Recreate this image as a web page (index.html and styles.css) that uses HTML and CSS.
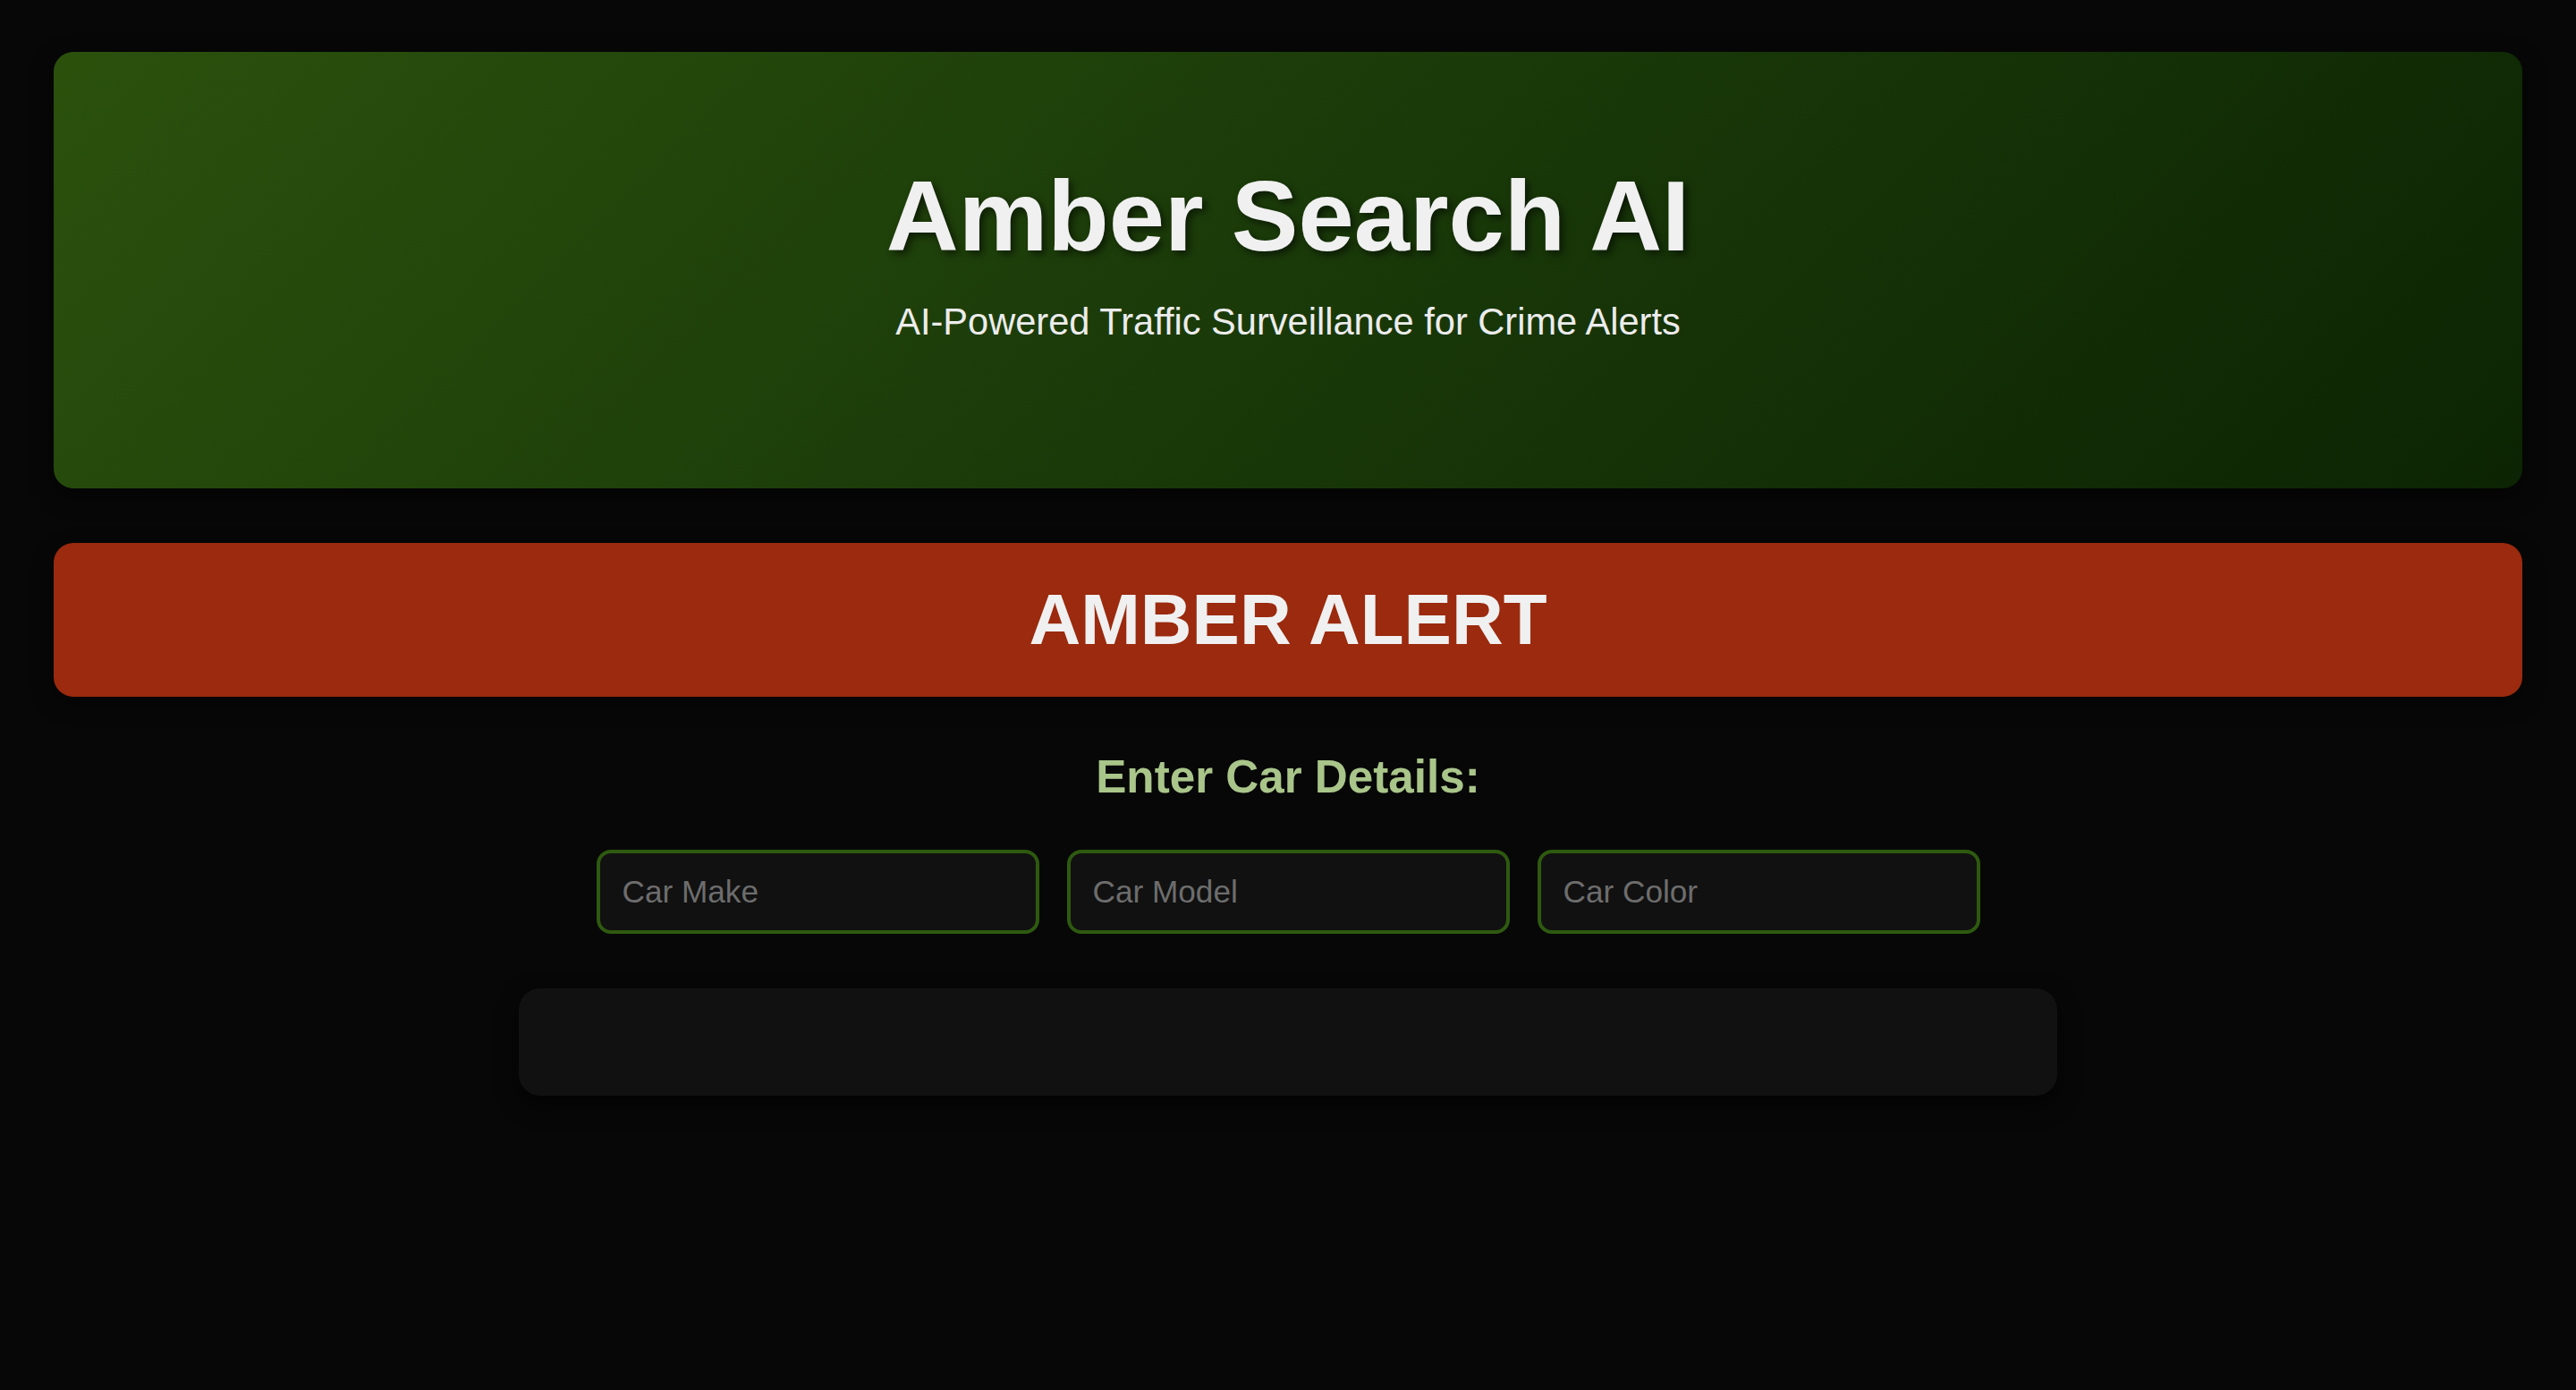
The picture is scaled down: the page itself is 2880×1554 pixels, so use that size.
FILE: index.html
```html
<!DOCTYPE html>
<html lang="en">
<head>
<meta charset="utf-8">
<title>Amber Search AI</title>
<link rel="stylesheet" href="styles.css">
</head>
<body>
  <div class="page">
    <header class="hero">
      <h1 class="hero-title">Amber Search AI</h1>
      <p class="hero-sub">AI-Powered Traffic Surveillance for Crime Alerts</p>
    </header>

    <section class="alert">
      <h2 class="alert-title">AMBER ALERT</h2>
    </section>

    <section class="details">
      <h3 class="details-title">Enter Car Details:</h3>
      <div class="inputs">
        <input class="field" type="text" placeholder="Car Make">
        <input class="field" type="text" placeholder="Car Model">
        <input class="field" type="text" placeholder="Car Color">
      </div>
      <div class="results"></div>
    </section>
  </div>
</body>
</html>
```

FILE: styles.css
```css
html, body {
  margin: 0;
  padding: 0;
  background: #070707;
  min-height: 100%;
}

body {
  font-family: "Liberation Sans", Arial, sans-serif;
  color: #f0f0f0;
}

.page {
  padding: 58px 60px 60px;
  display: flex;
  flex-direction: column;
  align-items: stretch;
}

.hero {
  background: linear-gradient(135deg, #2b510d 0%, #1a3a09 50%, #0c2403 100%);
  border-radius: 22px;
  padding: 119px 40px 162px;
  text-align: center;
  box-shadow: 0 8px 24px rgba(0, 0, 0, 0.5);
}

.hero-title {
  margin: 0;
  font-size: 112px;
  font-weight: 700;
  line-height: normal;
  color: #f0f0f0;
  text-shadow: 4px 4px 8px rgba(0, 0, 0, 0.55);
}

.hero-sub {
  margin: 30px 0 0;
  font-size: 41.6px;
  line-height: normal;
  color: #ececec;
}

.alert {
  margin-top: 61px;
  background: #9b2a0e;
  border-radius: 22px;
  padding: 40px;
  text-align: center;
  box-shadow: 0 8px 24px rgba(0, 0, 0, 0.4);
}

.alert-title {
  margin: 0;
  font-size: 80px;
  font-weight: 700;
  line-height: normal;
  color: #f0f0f0;
}

.details {
  display: flex;
  flex-direction: column;
  align-items: center;
  padding-top: 60px;
}

.details-title {
  margin: 0;
  font-size: 51.2px;
  font-weight: 700;
  line-height: normal;
  color: #a9c58a;
}

.inputs {
  margin-top: 52px;
  display: flex;
  gap: 31px;
  justify-content: center;
}

.field {
  box-sizing: border-box;
  width: 495px;
  height: 94px;
  padding: 0 25px;
  font-family: "Liberation Sans", Arial, sans-serif;
  font-size: 35.2px;
  color: #e0e0e0;
  background: #111111;
  border: 4px solid #2e5a10;
  border-radius: 16px;
  outline: none;
}

.field::placeholder {
  color: #6d6d6d;
}

.results {
  margin-top: 61px;
  width: 1720px;
  height: 120px;
  background: #111111;
  border-radius: 24px;
  box-shadow: 0 10px 24px rgba(0, 0, 0, 0.6);
}
```
